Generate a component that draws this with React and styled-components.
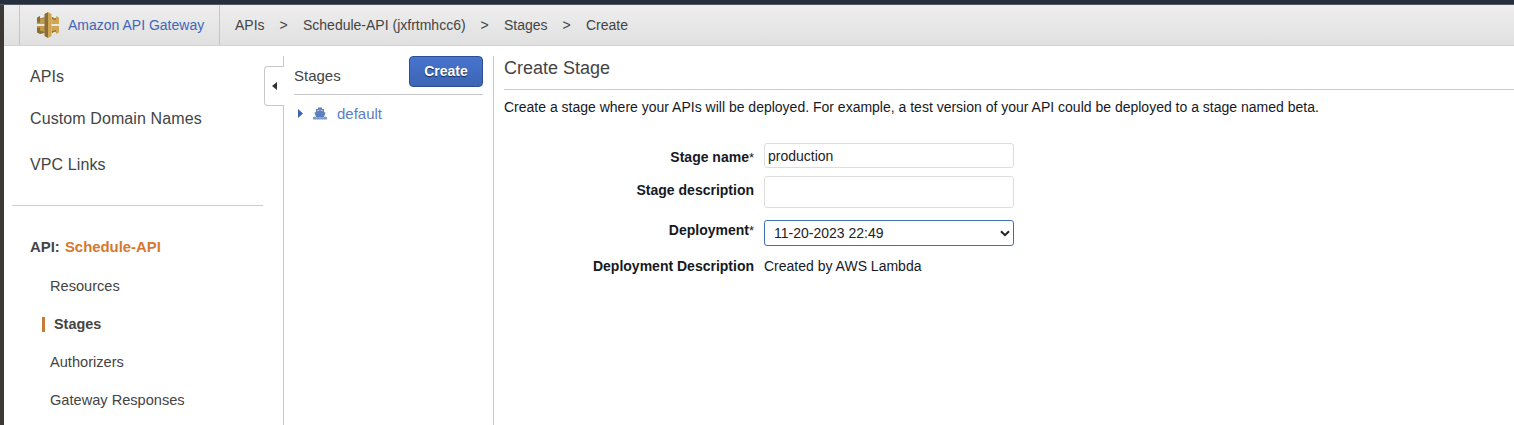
import React from "react";
import styled, { createGlobalStyle, css } from "styled-components";

const GlobalStyle = createGlobalStyle`
  * { box-sizing: border-box; }
  html, body { margin: 0; padding: 0; background: #fff; }
  body {
    font-family: "Liberation Sans", Arial, Helvetica, sans-serif;
    font-size: 14px;
    color: #16191f;
    overflow: hidden;
  }
`;

const Page = styled.div`
  display: flex;
  flex-direction: column;
  height: 425px;
`;

const TopStrip = styled.div`
  flex: none;
  height: 5px;
  background: #262f3d;
  border-bottom: 1px solid #525863;
`;

const Shell = styled.div`
  flex: 1;
  min-height: 0;
  display: flex;
  flex-direction: column;
  border-left: 4px solid #3b3835;
`;

const Header = styled.header`
  flex: none;
  display: flex;
  height: 41px;
  padding-left: 15px;
  background: linear-gradient(#eeeeee, #e0e0e0);
  border-bottom: 1px solid #d2d2d2;
  line-height: 40px;
  color: #444;
`;

const Brand = styled.a`
  display: flex;
  align-items: center;
  width: 201px;
  padding-left: 17px;
  border: solid #c6c6c6;
  border-width: 0 1px;
  color: #4365b8;

  svg { flex: none; margin-right: 9px; }
`;

const Crumbs = styled.nav`
  display: flex;
  gap: 15px;
  padding-left: 15px;
`;

const Separator = styled.span`
  width: 8.4px;
  font-size: 14px;
`;

const Columns = styled.div`
  flex: 1;
  min-height: 0;
  display: flex;
`;

const Sidebar = styled.aside`
  flex: none;
  width: 259px;
  padding: 21px 0 0 8px;
  color: #444;
`;

const MainLink = styled.a`
  display: block;
  height: ${(p) => p.$height}px;
  padding-left: 18px;
  font-size: 16px;
  letter-spacing: 0.1px;
  line-height: 20px;
`;

const Rule = styled.hr`
  width: 251px;
  height: 1px;
  margin: 0;
  border: 0;
  background: #ccc;
`;

const ApiTitle = styled.div`
  padding: 31px 0 0 18px;
  font-size: 14.9px;
  line-height: 20px;
  font-weight: bold;

  span { margin-left: 1px; color: #d5792f; }
`;

const SubLink = styled.a`
  display: flex;
  align-items: center;
  height: 38px;
  padding-left: 38px;
  font-size: 14.6px;

  ${(p) =>
    p.$active &&
    css`
      padding-left: 30px;
      font-size: 14.4px;
      font-weight: bold;
      &::before {
        content: "";
        width: 3px;
        height: 15px;
        margin-right: 9px;
        background: #c87b32;
      }
    `}
`;

const SubLinks = styled.div`
  padding-top: 10px;
`;

const Collapse = styled.button`
  flex: none;
  position: relative;
  z-index: 1;
  width: 20px;
  height: 40px;
  margin: 20px -1px 0 1px;
  padding: 0 0 0 7px;
  border: 1px solid #c8c8c8;
  border-right: 0;
  border-radius: 4px 0 0 4px;
  background: #fff;
  display: flex;
  align-items: center;
`;

const StagesPanel = styled.section`
  flex: none;
  width: 211px;
  margin-top: 10px;
  padding: 0 10px;
  border: solid #c8c8c8;
  border-width: 0 1px;
`;

const PanelHead = styled.div`
  display: flex;
  justify-content: space-between;
  height: 39px;
  border-bottom: 1px solid #c8c8c8;
  font-size: 15px;
  line-height: 40px;
  color: #444;
`;

const CreateButton = styled.button`
  width: 74px;
  height: 31px;
  padding: 0 0 1px;
  border: 1px solid #2f4f94;
  border-radius: 4px;
  background: linear-gradient(#4774cf, #3d65b4);
  color: #fff;
  font: bold 14px "Liberation Sans", Arial, sans-serif;
  text-shadow: 0 1px 1px #14274f;
`;

const StageRow = styled.div`
  display: flex;
  align-items: center;
  height: 37px;
  padding-left: 4px;
  font-size: 15px;
  color: #5c80bd;

  svg:first-child { margin-right: 10px; }
  svg:nth-child(2) { margin-right: 10px; }
`;

const Content = styled.main`
  flex: 1;
  padding: 10px 0 0 10px;
`;

const Title = styled.h1`
  height: 34px;
  margin: 0;
  border-bottom: 1px solid #ccc;
  font-size: 18px;
  font-weight: normal;
  line-height: 24px;
  color: #444;
`;

const Intro = styled.p`
  margin: 7px 0 26px;
  line-height: 20px;
`;

const FormRow = styled.div`
  display: flex;
  gap: 10px;
  margin-bottom: ${(p) => p.$gap || 0}px;
`;

const Label = styled.label`
  width: 250px;
  padding-top: ${(p) => p.$top}px;
  font-weight: bold;
  line-height: 18px;
  text-align: right;

  span { font-size: 13px; font-weight: normal; }
`;

const Input = styled.input`
  width: 250px;
  height: ${(p) => p.$height}px;
  padding: 0 3px;
  border: 1px solid #ddd;
  border-radius: 3px;
  outline: 0;
  font: inherit;
  color: #222;
`;

const Select = styled.div`
  display: flex;
  align-items: center;
  justify-content: space-between;
  width: 250px;
  height: 26px;
  padding: 0 3px 0 9px;
  border: 1px solid #3f70b8;
  border-radius: 3px;
  color: #222;
`;

const Value = styled.span`
  line-height: 18px;
`;

const GatewayIcon = () => (
  <svg width="22" height="26" viewBox="0 0 22 26">
    <path d="M0 5.500L3 4v2l1 .5L7.500 5v7H0zM0 14h7.500v7L3 22l-3-1.500z" fill="#8b6d35" />
    <path d="M3 7.500L7.500 6v6H3zM3 14.500h4.500V20L3 18.500zM0 10.500h7.500V12H0zM0 14h7.500v1.500H0z" fill="#c39a48" />
    <path d="M14.500 5L18 6.500l1-.5V4l3 1.500V12h-7.500zM14.500 14H22v6.500L19 22v-2l-1-.5-3.500 1.500z" fill="#cfa653" />
    <path d="M15 5l3 1.500 1-.5v2l-4-1zM15 19l4-1v2l-1-.5-3 1.500z" fill="#957437" />
    <path d="M11 0L7.500 2v22l3.500 2z" fill="#8b6d35" />
    <path d="M11 0l3.500 2v22L11 26z" fill="#cfa653" />
  </svg>
);

const ShipIcon = () => (
  <svg width="14" height="13" viewBox="0 0 14 13" fill="currentColor">
    <path d="M5 0.500h4V2h2v3l1.500.8L11 10H3L1.500 5.800 3 5V2h2z" />
    <path d="M4.200 3.200h5.600v1.100L7 3.600l-2.800.7z" fill="#dce5f4" />
    <path d="M0 10.300l1.500-.8 2 1 1.800-1 1.700 1 1.700-1 1.800 1 2-1 1.500.8v2.200H0z" opacity="0.8" />
  </svg>
);

const crumbs = ["APIs", "Schedule-API (jxfrtmhcc6)", "Stages", "Create"];
const subLinks = ["Resources", "Stages", "Authorizers", "Gateway Responses"];

export default function App() {
  return (
    <Page>
      <GlobalStyle />
      <TopStrip />
      <Shell>
        <Header>
          <Brand>
            <GatewayIcon />
            Amazon API Gateway
          </Brand>
          <Crumbs>
            {crumbs.map((name, i) => (
              <React.Fragment key={name}>
                {i > 0 && <Separator>&gt;</Separator>}
                <span>{name}</span>
              </React.Fragment>
            ))}
          </Crumbs>
        </Header>
        <Columns>
          <Sidebar>
            <MainLink $height={42}>APIs</MainLink>
            <MainLink $height={46}>Custom Domain Names</MainLink>
            <MainLink $height={50}>VPC Links</MainLink>
            <Rule />
            <ApiTitle>
              API: <span>Schedule-API</span>
            </ApiTitle>
            <SubLinks>
              {subLinks.map((name) => (
                <SubLink key={name} $active={name === "Stages"}>
                  {name}
                </SubLink>
              ))}
            </SubLinks>
          </Sidebar>
          <Collapse aria-label="Collapse">
            <svg width="5" height="8" viewBox="0 0 5 8">
              <path d="M5 0v8L0 4z" fill="#333" />
            </svg>
          </Collapse>
          <StagesPanel>
            <PanelHead>
              Stages
              <CreateButton>Create</CreateButton>
            </PanelHead>
            <StageRow>
              <svg width="5" height="9" viewBox="0 0 5 9">
                <path d="M0 0l5 4.500L0 9z" fill="#3c63b5" />
              </svg>
              <ShipIcon />
              default
            </StageRow>
          </StagesPanel>
          <Content>
            <Title>Create Stage</Title>
            <Intro>
              Create a stage where your APIs will be deployed. For example, a test version of your
              API could be deployed to a stage named beta.
            </Intro>
            <FormRow $gap={8}>
              <Label $top={5}>
                Stage name<span>*</span>
              </Label>
              <Input $height={25} defaultValue="production" />
            </FormRow>
            <FormRow $gap={12}>
              <Label $top={5}>Stage description</Label>
              <Input $height={32} />
            </FormRow>
            <FormRow $gap={11}>
              <Label $top={1}>
                Deployment<span>*</span>
              </Label>
              <Select>
                11-20-2023 22:49
                <svg width="10" height="7" viewBox="0 0 10 7">
                  <path d="M1 1.200l4 4 4-4" fill="none" stroke="#222" strokeWidth="2" />
                </svg>
              </Select>
            </FormRow>
            <FormRow>
              <Label $top={0}>Deployment Description</Label>
              <Value>Created by AWS Lambda</Value>
            </FormRow>
          </Content>
        </Columns>
      </Shell>
    </Page>
  );
}
